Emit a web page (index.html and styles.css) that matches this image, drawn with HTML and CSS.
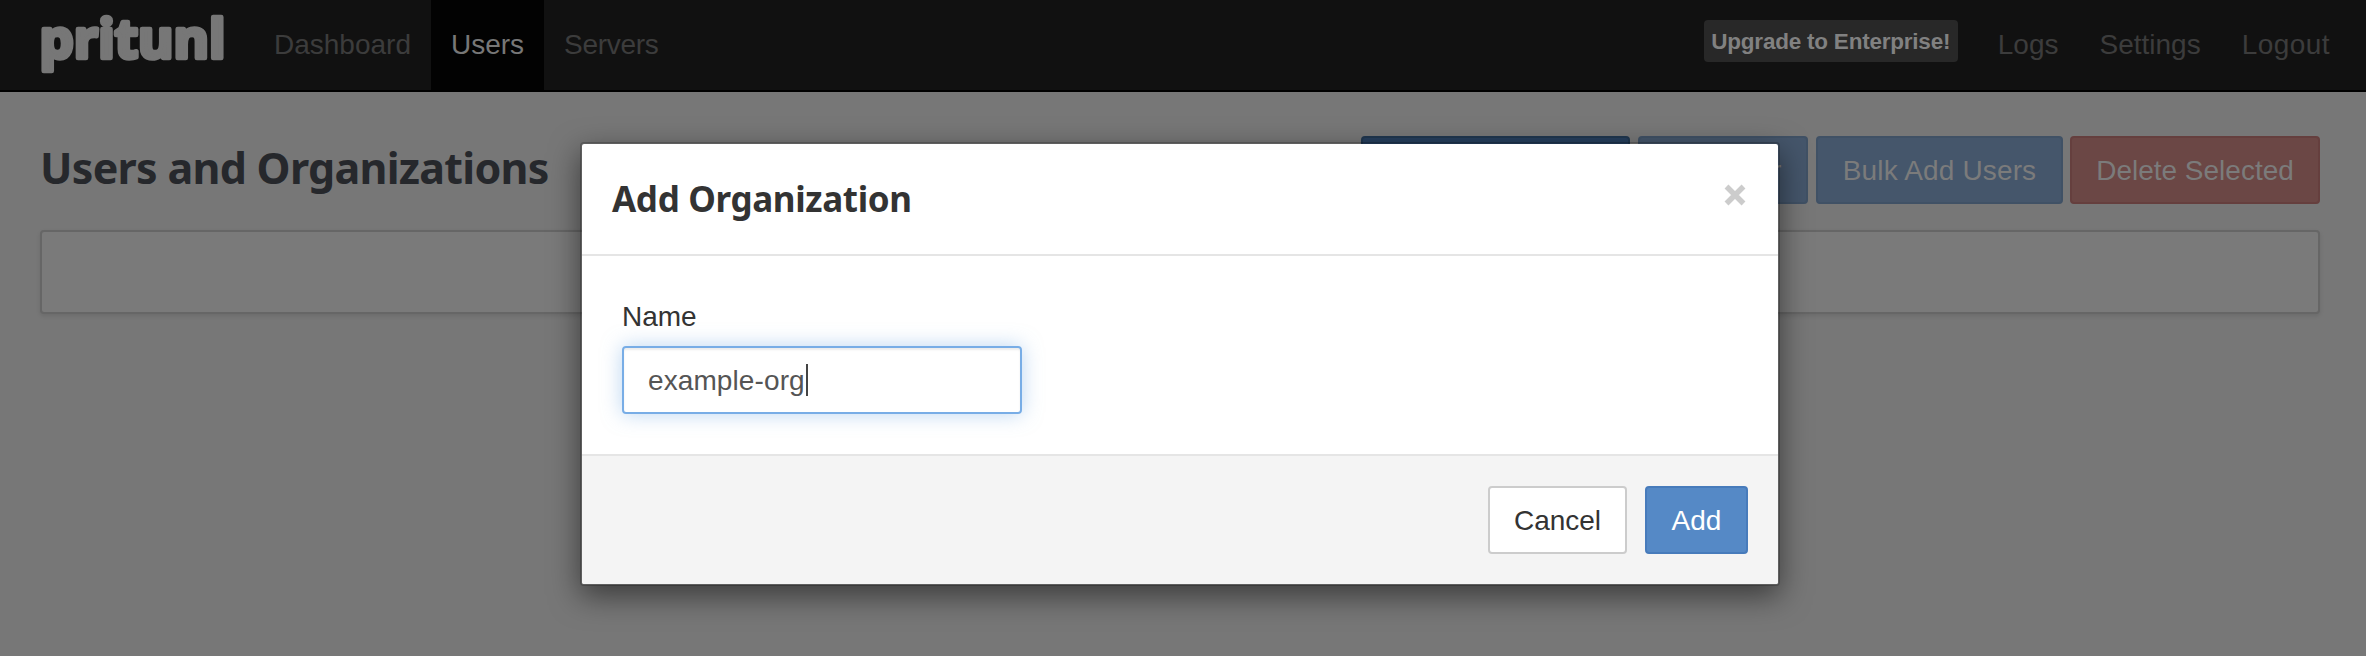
FILE: index.html
```html
<!DOCTYPE html>
<html lang="en">
<head>
<meta charset="utf-8">
<title>Users and Organizations</title>
<link rel="stylesheet" href="styles.css">
</head>
<body>
<nav class="navbar">
  <svg class="logo" width="194" height="90" viewBox="0 0 194 90" role="img" aria-label="pritunl"><text class="logo-text" x="-0.500" y="57.500" textLength="186" lengthAdjust="spacingAndGlyphs">pritunl</text></svg>
  <a class="nav-link">Dashboard</a>
  <a class="nav-link active">Users</a>
  <a class="nav-link servers">Servers</a>
  <div class="nav-right">
    <a class="upgrade">Upgrade to Enterprise!</a>
    <a class="nav-link">Logs</a>
    <a class="nav-link">Settings</a>
    <a class="nav-link logout">Logout</a>
  </div>
</nav>
<main class="page">
  <header class="page-head">
    <h1 class="page-title">Users and Organizations</h1>
    <div class="actions">
      <button class="btn dim-primary org">Add Organization</button>
      <button class="btn dim-blue user">Add User</button>
      <button class="btn dim-blue bulk">Bulk Add Users</button>
      <button class="btn dim-red delete">Delete Selected</button>
    </div>
  </header>
  <section class="panel"></section>
</main>
<div class="modal" role="dialog">
  <header class="modal-head">
    <h2 class="modal-title">Add Organization</h2>
    <svg class="close" width="22" height="22" viewBox="0 0 22 22"><path d="M2.500 2.500L19.500 19.500M19.500 2.500L2.500 19.500"/></svg>
  </header>
  <div class="modal-body">
    <label class="label">Name</label>
    <div class="field"><span class="value">example-org</span><span class="caret"></span></div>
  </div>
  <footer class="modal-foot">
    <button class="btn cancel">Cancel</button>
    <button class="btn add">Add</button>
  </footer>
</div>
</body>
</html>
```
FILE: styles.css
```css
* { box-sizing: border-box; }
body {
  margin: 0;
  height: 656px;
  overflow: hidden;
  background: #777;
  font: 28px/40px "Liberation Sans", Arial, sans-serif;
}
.navbar {
  display: flex;
  height: 92px;
  padding-left: 40px;
  background: #111;
  border-bottom: 2px solid #000;
}
.logo { width: 194px; margin-right: 20px; overflow: visible; }
.logo-text {
  font: 700 53px "Open Sans", sans-serif;
  fill: #777;
  stroke: #777;
  stroke-width: 4.500px;
  stroke-linejoin: round;
}
.nav-link {
  height: 90px;
  padding: 25px 20px 0;
  color: #3c3c3c;
  white-space: nowrap;
}
.active { background: #020202; color: #777; }
.servers { letter-spacing: -0.300px; }
.nav-right { display: flex; gap: 1px; margin-left: auto; padding-right: 16px; }
.upgrade {
  width: 254px;
  height: 42px;
  margin: 20px 19px 0 0;
  border-radius: 4px;
  background: #282828;
  color: #818181;
  font-size: 22.500px;
  font-weight: 700;
  letter-spacing: -0.220px;
  line-height: 44px;
  text-align: center;
  white-space: nowrap;
}
.logout { letter-spacing: 0.450px; }
.page { padding: 44px 46px 0 40px; }
.page-head { display: flex; justify-content: space-between; height: 68px; }
.page-title {
  margin: 0;
  color: #26282c;
  font: 700 43px/64px "Noto Sans", sans-serif;
  letter-spacing: -0.720px;
  white-space: nowrap;
}
.actions { display: flex; gap: 8px; }
.btn {
  height: 68px;
  padding: 1px 0 0;
  border: 2px solid;
  border-radius: 4px;
  font: 28px/62px "Liberation Sans", Arial, sans-serif;
  white-space: nowrap;
}
.dim-primary { background: #263f5e; border-color: #20374f; color: #777; }
.dim-blue { background: #45566b; border-color: #405165; color: #7b7b7b; }
.dim-red { background: #6b4745; border-color: #653f3e; color: #7b7b7b; }
.org { width: 269px; }
.user { width: 170px; }
.bulk { width: 247px; letter-spacing: 0.150px; }
.delete { width: 250px; margin-left: -1px; }
.panel {
  height: 84px;
  margin-top: 26px;
  border: 2px solid #666;
  border-radius: 4px;
  background: #7a7a7a;
  box-shadow: 0 2px 4px rgba(0, 0, 0, .1);
}
.modal {
  position: absolute;
  top: 142px;
  left: 580px;
  width: 1200px;
  border: 2px solid rgba(0, 0, 0, .2);
  border-radius: 4px;
  background: #fff;
  background-clip: padding-box;
  box-shadow: 0 10px 30px rgba(0, 0, 0, .5);
}
.modal-head {
  display: flex;
  justify-content: space-between;
  height: 112px;
  padding: 30px 32px 0 30px;
  border-bottom: 2px solid #e5e5e5;
}
.modal-title {
  margin: 0;
  color: #333;
  font: 700 35px/50px "Noto Sans", sans-serif;
  letter-spacing: -0.350px;
}
.close { margin-top: 10px; fill: none; stroke: #ccc; stroke-width: 5.500; }
.modal-body { height: 198px; padding: 41px 40px 0; }
.label { display: block; color: #333; }
.field {
  display: flex;
  align-items: center;
  width: 400px;
  height: 68px;
  margin-top: 9px;
  padding: 0 24px;
  border: 2px solid #78ade6;
  border-radius: 4px;
  box-shadow: inset 0 2px 2px rgba(0, 0, 0, .075), 0 0 20px rgba(120, 173, 230, .5);
  color: #555;
}
.value { padding-top: 1px; letter-spacing: 0.100px; }
.caret { width: 2px; height: 32px; margin-left: 1px; background: #444; }
.modal-foot {
  display: flex;
  justify-content: flex-end;
  gap: 18px;
  height: 130px;
  padding: 30px 30px 0;
  border-top: 2px solid #e5e5e5;
  border-radius: 0 0 2px 2px;
  background: #f4f4f4;
}
.cancel { width: 139px; background: #fff; border-color: #ccc; color: #333; }
.add { width: 103px; background: #5589c6; border-color: #477bbb; color: #fff; }
```
